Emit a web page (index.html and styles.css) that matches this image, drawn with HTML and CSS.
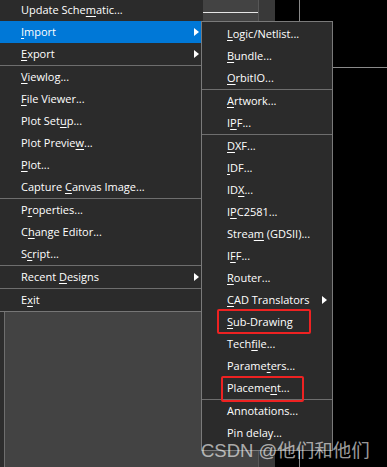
FILE: index.html
```html
<!DOCTYPE html>
<html lang="en">
<head>
    <meta charset="UTF-8">
    <title>File menu - Import</title>
    <link rel="stylesheet" href="styles.css">
</head>
<body>
    <div class="window">
        <div class="side-panel">
            <div class="panel-rule"></div>
        </div>
        <div class="splitter"></div>
        <div class="canvas">
            <div class="canvas-rule"></div>
        </div>
    </div>

    <!-- File menu -->
    <div class="menu main-menu">
        <div class="item">Update Sche<u>m</u>atic...</div>
        <div class="item sub active"><span><u>I</u>mport</span><span class="arrow"></span></div>
        <div class="item sub"><span><u>E</u>xport</span><span class="arrow"></span></div>
        <div class="sep"></div>
        <div class="item"><u>V</u>iewlog...</div>
        <div class="item"><u>F</u>ile Viewer...</div>
        <div class="item">Plot Set<u>u</u>p...</div>
        <div class="item">Plot Previe<u>w</u>...</div>
        <div class="item"><u>P</u>lot...</div>
        <div class="item">Capture <u>C</u>anvas Image...</div>
        <div class="sep"></div>
        <div class="item">P<u>r</u>operties...</div>
        <div class="item">C<u>h</u>ange Editor...</div>
        <div class="item">S<u>c</u>ript...</div>
        <div class="sep"></div>
        <div class="item sub"><span>Recent <u>D</u>esigns</span><span class="arrow"></span></div>
        <div class="sep"></div>
        <div class="item">E<u>x</u>it</div>
    </div>

    <!-- Import submenu -->
    <div class="menu sub-menu">
        <div class="item"><u>L</u>ogic/Netlist...</div>
        <div class="item"><u>B</u>undle...</div>
        <div class="item"><u>O</u>rbitIO...</div>
        <div class="sep"></div>
        <div class="item"><u>A</u>rtwork...</div>
        <div class="item">I<u>P</u>F...</div>
        <div class="sep"></div>
        <div class="item"><u>D</u>XF...</div>
        <div class="item"><u>I</u>DF...</div>
        <div class="item">ID<u>X</u>...</div>
        <div class="item">I<u>P</u>C2581...</div>
        <div class="item">Strea<u>m</u> (GDSII)...</div>
        <div class="item">I<u>F</u>F...</div>
        <div class="item"><u>R</u>outer...</div>
        <div class="item sub"><span><u>C</u>AD Translators</span><span class="arrow"></span></div>
        <div class="item"><u>S</u>ub-Drawing</div>
        <div class="item">Tech<u>f</u>ile...</div>
        <div class="item">Parame<u>t</u>ers...</div>
        <div class="item">Placeme<u>n</u>t...</div>
        <div class="sep"></div>
        <div class="item">Annotations...</div>
        <div class="item">Pin delay...</div>
    </div>

    <div class="mark mark-subdrawing"></div>
    <div class="mark mark-placement"></div>

    <div class="watermark">CSDN @他们和他们</div>
</body>
</html>
```

FILE: styles.css
```css
* {
    margin: 0;
    padding: 0;
    box-sizing: border-box;
}

body {
    width: 387px;
    height: 467px;
    overflow: hidden;
    background: #000;
    font-family: 'Open Sans', 'Noto Sans', sans-serif;
    font-size: 11px;
    color: #fff;
}

.window {
    display: flex;
    height: 467px;
}

.side-panel {
    width: 259px;
    background-color: #434343;
    border-left: 4px solid #2d2d2d;
    border-right: 1px solid #575757;
    box-shadow: inset 1px 0 0 #6e6e6e;
    padding-top: 12px;
}

.panel-rule {
    height: 1px;
    background-color: #e6e6e6;
}

.splitter {
    width: 16px;
    background-color: #393939;
}

.canvas {
    flex: 1;
    padding-left: 24px;
    padding-top: 67px;
    background: linear-gradient(#8a8a8a, #8a8a8a) 24px 0 / 1px 100% no-repeat, #000;
}

.canvas-rule {
    height: 1px;
    background-color: #8a8a8a;
}

/* menus */
.menu {
    position: absolute;
    background-color: #2b2b2b;
}

.main-menu {
    left: 0;
    top: -1px;
    width: 203px;
    border-bottom: 1px solid #767676;
}

.sub-menu {
    left: 201px;
    top: 21px;
    width: 132px;
    border: 1px solid #7a7a7a;
    padding: 1px 0 6px;
}

.item {
    height: 22px;
    line-height: 22px;
    padding-left: 21px;
    padding-right: 4px;
    white-space: nowrap;
}

.item.sub {
    display: flex;
    justify-content: space-between;
    align-items: center;
}

.sub-menu .item {
    padding-left: 25px;
    padding-right: 5px;
}

.item u {
    text-underline-offset: 2px;
}

.item.active {
    background-color: #0078d7;
}

.arrow {
    width: 0;
    height: 0;
    border-left: 5px solid #fff;
    border-top: 4.5px solid transparent;
    border-bottom: 4.5px solid transparent;
}

.sep {
    height: 1px;
    background-color: #6e6e6e;
}

/* red highlight boxes */
.mark {
    position: absolute;
    border: 2px solid #ee2222;
    border-radius: 2px;
}

.mark-subdrawing {
    left: 217px;
    top: 309px;
    width: 94px;
    height: 25px;
}

.mark-placement {
    left: 221px;
    top: 376px;
    width: 83px;
    height: 26px;
}

.watermark {
    position: absolute;
    left: 201px;
    top: 436px;
    font-family: 'Liberation Sans', 'Noto Sans CJK SC', sans-serif;
    font-size: 18.5px;
    color: rgba(255, 255, 255, 0.62);
    white-space: nowrap;
}
```
